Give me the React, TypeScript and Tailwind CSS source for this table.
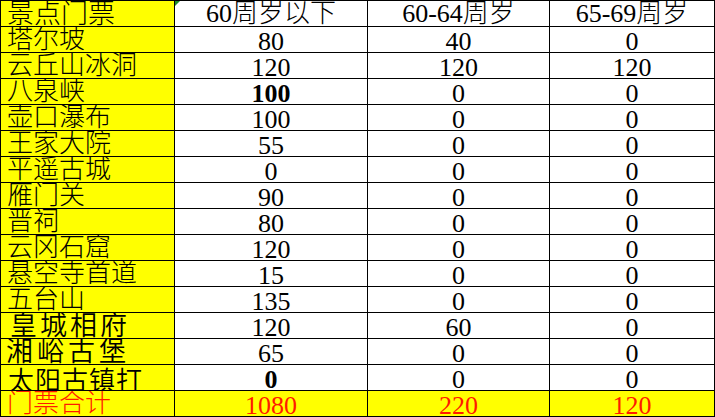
import React from 'react';

type Row = {
  name: string;
  values: [string, string, string];
  nameStyle?: string;
  bold?: boolean;
};

const rows: Row[] = [
  { name: '塔尔坡', values: ['80', '40', '0'] },
  { name: '云丘山冰洞', values: ['120', '120', '120'] },
  { name: '八泉峡', values: ['100', '0', '0'], bold: true },
  { name: '壶口瀑布', values: ['100', '0', '0'] },
  { name: '王家大院', values: ['55', '0', '0'] },
  { name: '平遥古城', values: ['0', '0', '0'] },
  { name: '雁门关', values: ['90', '0', '0'] },
  { name: '晋祠', values: ['80', '0', '0'] },
  { name: '云冈石窟', values: ['120', '0', '0'] },
  { name: '悬空寺首道', values: ['15', '0', '0'] },
  { name: '五台山', values: ['135', '0', '0'] },
  { name: '皇城相府', values: ['120', '60', '0'], nameStyle: 'font-[350] text-[27px] tracking-[3px] pl-[9px]' },
  { name: '湘峪古堡', values: ['65', '0', '0'], nameStyle: 'font-[350] text-[27px] tracking-[4px] pl-[5px]' },
  { name: '太阳古镇打', values: ['0', '0', '0'], nameStyle: 'font-[350] text-[26px] tracking-[1px] pl-[7px] pt-[4px]', bold: true },
];

const font = "font-['Liberation_Serif','Noto_Sans_CJK_SC',serif]";

const App: React.FC = () => {
  return (
    <div className={`w-[715px] h-[417px] bg-white ${font}`}>
      <div className="grid grid-cols-[173px_192px_181px_164px] auto-rows-[25px] gap-px bg-black p-px w-[715px] h-[417px] text-[26px] leading-[26px] text-black">
        {/* Header */}
        <div className="bg-[#ffff00] pl-[6px] text-[27px] font-light overflow-hidden whitespace-nowrap">景点门票</div>
        <div className="relative bg-white text-center font-light overflow-hidden whitespace-nowrap">
          <span className="absolute left-0 top-0 w-0 h-0 border-t-[5px] border-r-[5px] border-t-[#1e8a2a] border-r-transparent" />
          60周岁以下
        </div>
        <div className="bg-white text-center font-light overflow-hidden whitespace-nowrap">60-64周岁</div>
        <div className="bg-white text-center font-light overflow-hidden whitespace-nowrap">65-69周岁</div>

        {rows.map((r) => (
          <React.Fragment key={r.name}>
            <div className={`bg-[#ffff00] overflow-hidden whitespace-nowrap ${r.nameStyle ?? 'font-light pl-[6px]'}`}>
              {r.name}
            </div>
            {r.values.map((v, i) => (
              <div
                key={i}
                className={`bg-white text-center overflow-hidden whitespace-nowrap pt-[2px] ${
                  r.bold && i === 0 ? 'font-bold' : ''
                }`}
              >
                {v}
              </div>
            ))}
          </React.Fragment>
        ))}

        {/* Total */}
        <div className="bg-[#ffff00] text-[#ff1a00] pl-[6px] font-light overflow-hidden whitespace-nowrap">门票合计</div>
        <div className="bg-[#ffff00] text-[#ff1a00] text-center overflow-hidden whitespace-nowrap pt-[2px]">1080</div>
        <div className="bg-[#ffff00] text-[#ff1a00] text-center overflow-hidden whitespace-nowrap pt-[2px]">220</div>
        <div className="bg-[#ffff00] text-[#ff1a00] text-center overflow-hidden whitespace-nowrap pt-[2px]">120</div>
      </div>
    </div>
  );
};

export default App;
